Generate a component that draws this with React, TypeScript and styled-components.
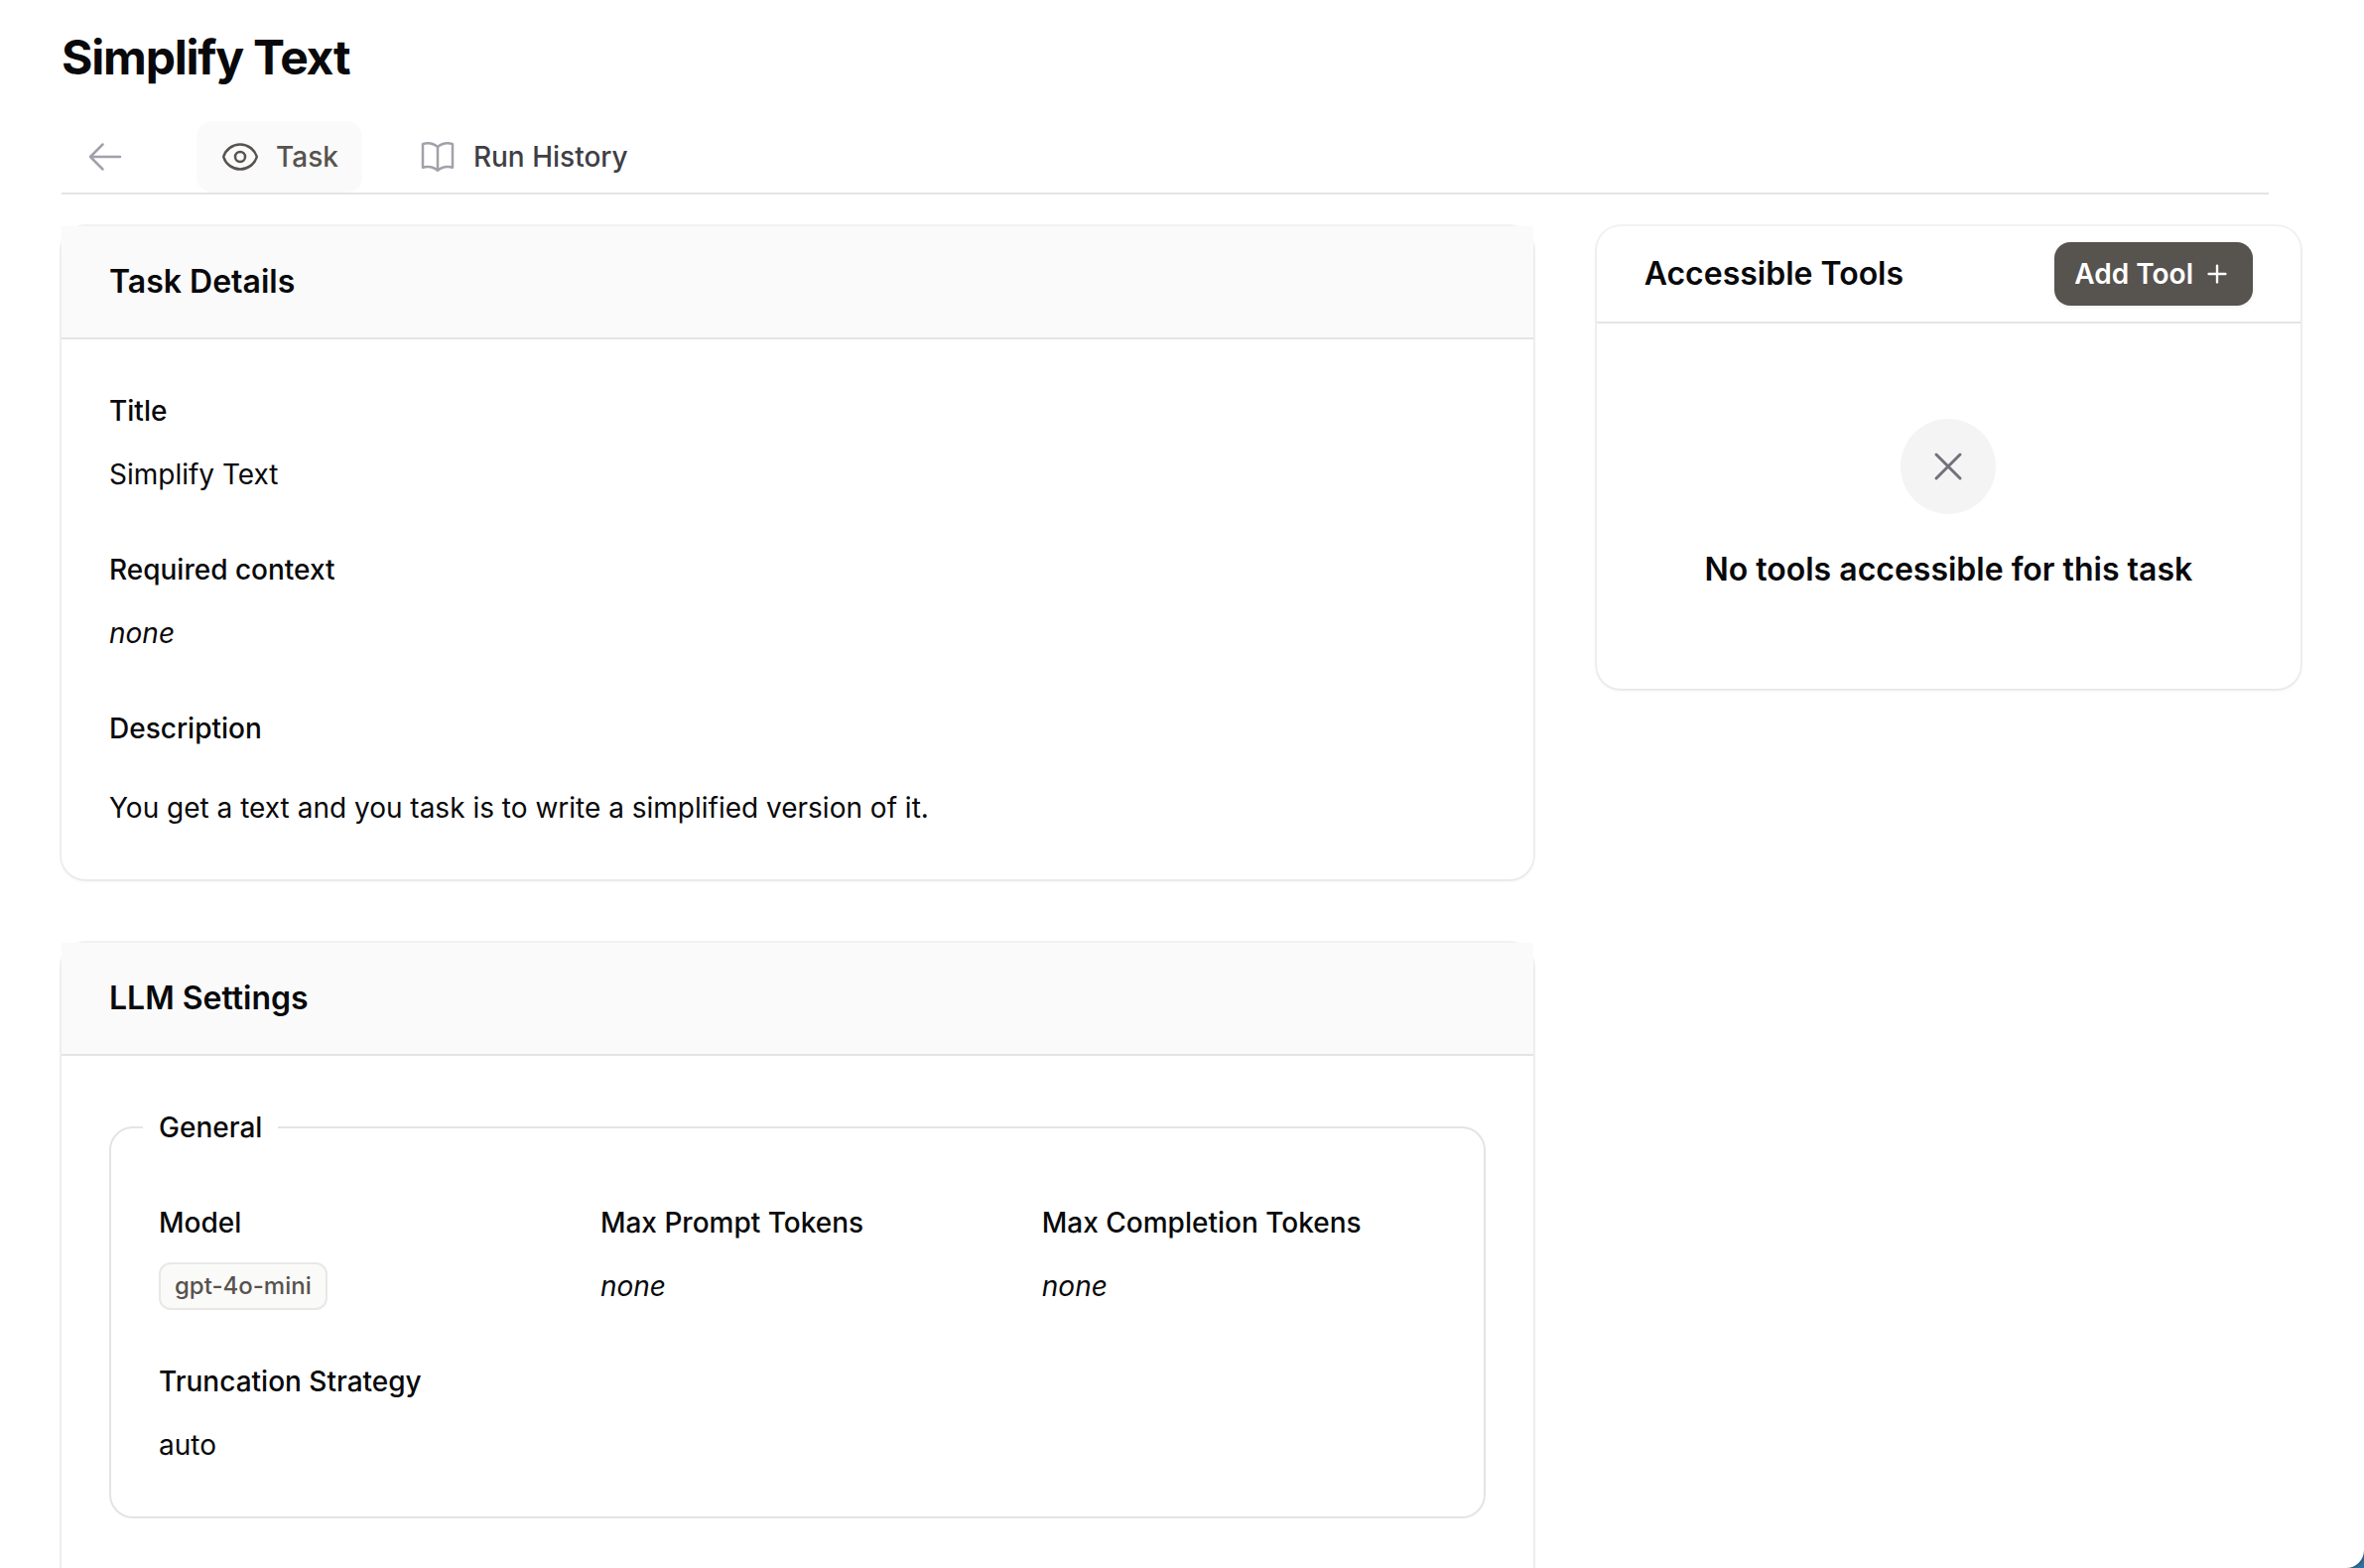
import React from "react";
import styled, { createGlobalStyle } from "styled-components";
import {
  HiMiniPlus,
  HiOutlineArrowLeft,
  HiOutlineBookOpen,
  HiOutlineEye,
  HiOutlineXMark,
} from "react-icons/hi2";

const GlobalStyle = createGlobalStyle`
  *, *::before, *::after { box-sizing: border-box; }
  html, body, #root { height: 100%; }
  body {
    margin: 0;
    overflow: hidden;
    background: #3272a2;
    color: #09090b;
    font-family: Inter, "Liberation Sans", sans-serif;
    font-size: 28px;
    line-height: 48px;
    font-optical-sizing: none;
  }
  h1, h2, h3, p, dl, dt, dd { margin: 0; }
`;

const Page = styled.main`
  height: 100%;
  overflow: hidden;
  padding: 26px 64px 0 62px;
  background: #fff;
  border-bottom-right-radius: 18px;
  box-shadow: 0 0 4px rgba(0, 0, 0, 0.5);
`;

const PageTitle = styled.h1`
  font-size: 48px;
  line-height: 64px;
  font-weight: 700;
  letter-spacing: -0.025em;
`;

const Tabs = styled.nav`
  display: flex;
  gap: 32px;
  margin: 32px 32px 32px 0;
  border-bottom: 2px solid #e4e4e4;
`;

const Tab = styled.a<{ $active?: boolean }>`
  display: flex;
  align-items: center;
  gap: 16px;
  padding: 16px 24px;
  border-radius: 16px;
  line-height: 40px;
  font-weight: 500;
  text-decoration: none;
  color: ${(p) => (p.$active ? "#57534e" : "#3f3f46")};
  background: ${(p) => (p.$active ? "#fafafa" : "transparent")};

  svg {
    width: 40px;
    height: 40px;
    color: ${(p) => (p.$active ? "#57534e" : "#a1a1aa")};
  }
`;

const Columns = styled.div`
  display: grid;
  grid-template-columns: repeat(3, minmax(0, 1fr));
  gap: 64px;
  align-items: start;
`;

const MainColumn = styled.div`
  grid-column: span 2;
  display: grid;
  gap: 64px;
`;

const Card = styled.section`
  border-radius: 24px;
  background: #fff;
  box-shadow: 0 0 0 2px rgba(9, 9, 11, 0.05), 0 2px 4px rgba(0, 0, 0, 0.05);
`;

const CardHeader = styled.header<{ $compact?: boolean }>`
  display: flex;
  align-items: center;
  justify-content: space-between;
  padding: ${(p) => (p.$compact ? "16px 48px" : "32px 48px")};
  background: ${(p) => (p.$compact ? "transparent" : "#fafafa")};
  border-bottom: 2px solid #e4e4e4;
`;

const CardTitle = styled.h2`
  font-size: 32px;
  line-height: 48px;
  font-weight: 600;
`;

const CardBody = styled.div<{ $tall?: boolean }>`
  padding: 48px 48px ${(p) => (p.$tall ? "96px" : "48px")};
`;

const Fields = styled.dl<{ $columns?: number }>`
  display: grid;
  grid-template-columns: repeat(${(p) => p.$columns ?? 1}, minmax(0, 1fr));
  gap: 48px;
`;

const FieldBox = styled.div<{ $prose?: boolean }>`
  display: grid;
  justify-items: start;
  gap: ${(p) => (p.$prose ? "32px" : "16px")};

  dt {
    font-weight: 500;
  }
`;

const Badge = styled.span`
  display: block;
  padding: 4px 16px;
  border-radius: 12px;
  background: #fafaf9;
  box-shadow: inset 0 0 0 2px #e8e8e7;
  color: #57534e;
  font-size: 24px;
  line-height: 40px;
  font-weight: 500;
`;

const Group = styled.fieldset`
  min-width: 0;
  margin: 0;
  padding: 48px;
  border: 2px solid #e4e4e4;
  border-radius: 24px;

  legend {
    margin-left: -16px;
    padding: 0 16px;
    font-weight: 500;
  }
`;

const AddButton = styled.button`
  display: flex;
  align-items: center;
  gap: 8px;
  padding: 12px 20px;
  border: 0;
  border-radius: 16px;
  background: #57534e;
  box-shadow: 0 2px 4px rgba(0, 0, 0, 0.05);
  color: #fff;
  font: inherit;
  font-weight: 600;
  line-height: 40px;
  cursor: pointer;

  svg {
    width: 32px;
    height: 32px;
  }
`;

const EmptyState = styled.div`
  display: grid;
  justify-items: center;
  gap: 32px;
  padding: 96px 48px;
  text-align: center;
`;

const EmptyIcon = styled.div`
  display: grid;
  place-items: center;
  width: 96px;
  height: 96px;
  border-radius: 50%;
  background: #f4f4f4;
  color: #71717a;

  svg {
    width: 48px;
    height: 48px;
  }
`;

function Field({
  label,
  prose,
  children,
}: {
  label: string;
  prose?: boolean;
  children: React.ReactNode;
}) {
  return (
    <FieldBox $prose={prose}>
      <dt>{label}</dt>
      <dd>{children}</dd>
    </FieldBox>
  );
}

export default function App() {
  return (
    <>
      <GlobalStyle />
      <Page>
        <PageTitle>Simplify Text</PageTitle>
        <Tabs>
          <Tab href="#back" aria-label="Back">
            <HiOutlineArrowLeft />
            <span />
          </Tab>
          <Tab href="#task" $active aria-current="page">
            <HiOutlineEye />
            <span>Task</span>
          </Tab>
          <Tab href="#history">
            <HiOutlineBookOpen />
            <span>Run History</span>
          </Tab>
        </Tabs>
        <Columns>
          <MainColumn>
            <Card>
              <CardHeader>
                <CardTitle>Task Details</CardTitle>
              </CardHeader>
              <CardBody>
                <Fields>
                  <Field label="Title">Simplify Text</Field>
                  <Field label="Required context">
                    <em>none</em>
                  </Field>
                  <Field label="Description" prose>
                    You get a text and you task is to write a simplified version of it.
                  </Field>
                </Fields>
              </CardBody>
            </Card>
            <Card>
              <CardHeader>
                <CardTitle>LLM Settings</CardTitle>
              </CardHeader>
              <CardBody $tall>
                <Group>
                  <legend>General</legend>
                  <Fields $columns={3}>
                    <Field label="Model">
                      <Badge>gpt-4o-mini</Badge>
                    </Field>
                    <Field label="Max Prompt Tokens">
                      <em>none</em>
                    </Field>
                    <Field label="Max Completion Tokens">
                      <em>none</em>
                    </Field>
                    <Field label="Truncation Strategy">auto</Field>
                  </Fields>
                </Group>
              </CardBody>
            </Card>
          </MainColumn>
          <Card>
            <CardHeader $compact>
              <CardTitle>Accessible Tools</CardTitle>
              <AddButton type="button">
                Add Tool
                <HiMiniPlus />
              </AddButton>
            </CardHeader>
            <EmptyState>
              <EmptyIcon>
                <HiOutlineXMark />
              </EmptyIcon>
              <CardTitle as="h3">No tools accessible for this task</CardTitle>
            </EmptyState>
          </Card>
        </Columns>
      </Page>
    </>
  );
}
